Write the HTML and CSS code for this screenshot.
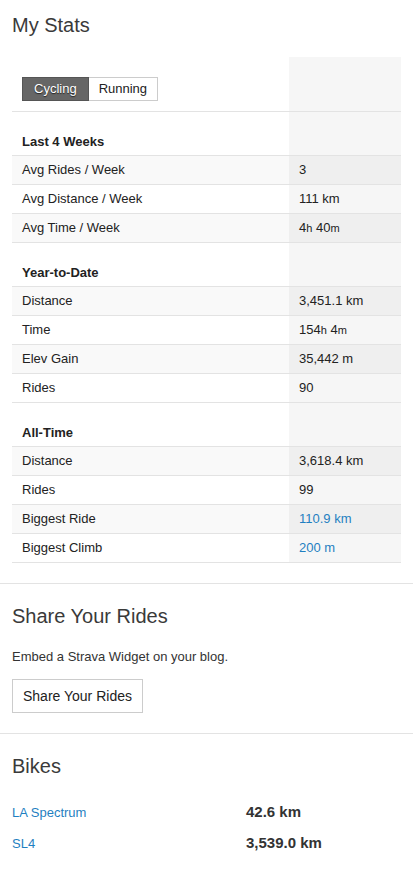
FILE: index.html
```html
<html>

<head>
    <title>My Stats</title>
    <meta name="viewport" content="width=device-width, initial-scale=1.0">
    <link rel="stylesheet" href="styles.css">
</head>

<body>
    <section class="section" id="stats">
        <h2>My Stats</h2>
        <table class="stats-table">
            <thead>
                <tr>
                    <th class="toggle-cell">
                        <div class="toggle">
                            <button class="toggle-btn active">Cycling</button><button class="toggle-btn">Running</button>
                        </div>
                    </th>
                    <td class="val"></td>
                </tr>
            </thead>
            <tbody>
                <tr class="group">
                    <th>Last 4 Weeks</th>
                    <td class="val"></td>
                </tr>
                <tr>
                    <td>Avg Rides / Week</td>
                    <td class="val">3</td>
                </tr>
                <tr>
                    <td>Avg Distance / Week</td>
                    <td class="val">111 km</td>
                </tr>
                <tr>
                    <td>Avg Time / Week</td>
                    <td class="val">4<abbr class="unit">h</abbr> 40<abbr class="unit">m</abbr></td>
                </tr>
            </tbody>
            <tbody>
                <tr class="group">
                    <th>Year-to-Date</th>
                    <td class="val"></td>
                </tr>
                <tr>
                    <td>Distance</td>
                    <td class="val">3,451.1 km</td>
                </tr>
                <tr>
                    <td>Time</td>
                    <td class="val">154<abbr class="unit">h</abbr> 4<abbr class="unit">m</abbr></td>
                </tr>
                <tr>
                    <td>Elev Gain</td>
                    <td class="val">35,442 m</td>
                </tr>
                <tr>
                    <td>Rides</td>
                    <td class="val">90</td>
                </tr>
            </tbody>
            <tbody>
                <tr class="group">
                    <th>All-Time</th>
                    <td class="val"></td>
                </tr>
                <tr>
                    <td>Distance</td>
                    <td class="val">3,618.4 km</td>
                </tr>
                <tr>
                    <td>Rides</td>
                    <td class="val">99</td>
                </tr>
                <tr>
                    <td>Biggest Ride</td>
                    <td class="val"><a href="#">110.9 km</a></td>
                </tr>
                <tr>
                    <td>Biggest Climb</td>
                    <td class="val"><a href="#">200 m</a></td>
                </tr>
            </tbody>
        </table>
    </section>

    <section class="section" id="share">
        <h2>Share Your Rides</h2>
        <p>Embed a Strava Widget on your blog.</p>
        <button class="btn">Share Your Rides</button>
    </section>

    <section class="section" id="bikes">
        <h2>Bikes</h2>
        <ul class="bike-list">
            <li><a href="#">LA Spectrum</a><b>42.6 km</b></li>
            <li><a href="#">SL4</a><b>3,539.0 km</b></li>
        </ul>
    </section>
</body>

</html>
```

FILE: styles.css
```css
body {
    margin: 0;
    font-family: "Helvetica Neue", "Liberation Sans", Arial, sans-serif;
    font-size: 13px;
    color: #333;
    background: white;
}

a {
    color: #1f7fc1;
    text-decoration: none;
}

.section {
    padding: 0 12px 20px;
    border-top: 1px solid #e3e3e3;
}

.section h2 {
    margin: 20px 0 0;
    font-size: 20px;
    line-height: 24px;
    font-weight: 300;
    color: #3a3a3a;
}

#stats {
    border-top: none;
}

#stats h2 {
    margin: 13px 0 20px;
}

/* stats table */

.stats-table {
    width: 100%;
    border-collapse: collapse;
    font-size: 13px;
    color: #222;
}

.stats-table th,
.stats-table td {
    padding: 6px 10px;
    line-height: 16px;
    text-align: left;
    border-bottom: 1px solid #e3e3e3;
}

.stats-table tbody tr:nth-child(even) {
    background: #f9f9f9;
}

.stats-table .val {
    width: 92px;
    background: #f6f6f6;
}

.stats-table tbody tr:nth-child(even) .val {
    background: #efefef;
}

.stats-table .group th {
    padding: 22px 10px 6px;
    line-height: 15px;
    font-weight: bold;
}

.stats-table .toggle-cell {
    padding: 20px 10px 10px;
}

.unit {
    font-size: 11px;
    text-decoration: none;
}

.toggle {
    display: flex;
}

.toggle-btn {
    margin: 0;
    padding: 3px 10px;
    font-family: inherit;
    font-size: 13px;
    line-height: 16px;
    color: #222;
    background: white;
    border: 1px solid #ccc;
    border-radius: 0;
}

.toggle-btn + .toggle-btn {
    border-left: none;
}

.toggle-btn.active {
    padding: 3px 11px;
    color: white;
    background: #666;
    border-color: #555;
    text-shadow: 0 1px 1px #222;
}

/* share */

#share p {
    margin: 21px 0 14px;
    line-height: 16px;
}

.btn {
    padding: 7px 10px;
    font-family: inherit;
    font-size: 14px;
    line-height: 18px;
    color: #222;
    background: white;
    border: 1px solid #ccc;
    border-radius: 0;
}

/* bikes */

.bike-list {
    list-style: none;
    margin: 19px 0 0;
    padding: 0;
}

.bike-list li {
    display: grid;
    grid-template-columns: 234px 1fr;
    align-items: baseline;
    line-height: 30px;
}

.bike-list b {
    font-size: 15px;
    color: #333;
}
```
